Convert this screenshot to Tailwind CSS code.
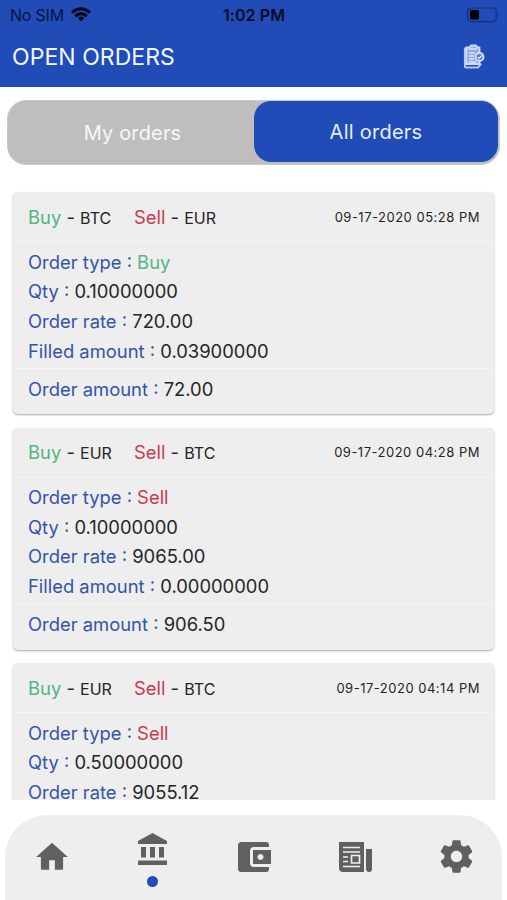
<!DOCTYPE html>
<html lang="en">
<head>
<meta charset="utf-8">
<title>Open orders</title>
<script src="https://cdn.jsdelivr.net/npm/@tailwindcss/browser@4"></script>
</head>
<body class="bg-white font-['Inter',sans-serif]">
<div class="flex h-[900px] w-[507px] flex-col overflow-hidden">
  <header class="h-[87px] shrink-0 bg-[#214bb6]">
    <div class="grid h-[29px] grid-cols-3 items-center pl-[10px] pr-[7px] text-[#0a1440]">
      <div class="flex items-center gap-[7px]">
        <span class="text-[16px] tracking-[-0.2px]">No SIM</span>
        <svg class="h-[15px] w-[20px]" viewBox="0 0 20 15" fill="none" stroke="#020617" stroke-width="3"><path d="M1 5.6Q10-2 19 5.6M4.3 9Q10 4.2 15.7 9"/><path d="M6.8 11Q10 8.2 13.2 11L10 14.5Z" fill="#020617" stroke="none"/></svg>
      </div>
      <span class="-ml-[2px] text-center text-[16px] font-semibold tracking-[0.1px] text-[#040b26]">1:02 PM</span>
      <svg class="h-[16px] w-[33px] justify-self-end" viewBox="0 0 33 16"><rect x=".7" y="1" width="28.6" height="13.6" rx="3.5" fill="none" stroke="#152e78" stroke-width="1.2"/><rect x="3" y="3" width="9" height="9.6" rx="1.5" fill="#000"/><path d="M31 5.5q2 2.3 0 4.6z" fill="#152e78"/></svg>
    </div>
    <div class="flex h-[57px] items-center justify-between pl-[12px] pr-[22px]">
      <h1 class="text-[23px] tracking-[0.05px] text-[#f1f6ff]">OPEN ORDERS</h1>
      <svg class="-mt-[2px] h-[25px] w-[22px]" viewBox="0 0 22 25" fill="none"><path d="M2 3.500v19q0 1 1 1h12l3-4" stroke="#b3c7f5" stroke-width="2.200"/><path d="M3.500 3.500h3l1.500-2h5l1.500 2h2V20H3.500z" fill="#8fa8e4" stroke="#cfddfb" stroke-width="1.800"/><path d="M6 5h8M6 9h6M6 12h5M6 15h5M6 18h7" stroke="#dbe6ff" stroke-width="1.400"/><circle cx="16.500" cy="13" r="4" fill="#5878cd" stroke="#cfddfb" stroke-width="2"/><path d="m14.700 13 1.500 1.500 2.500-3" stroke="#dbe6ff" stroke-width="1.300"/></svg>
    </div>
  </header>
  <main class="flex h-[713px] shrink-0 flex-col overflow-hidden pt-[13px]">
    <div class="mx-[7px] flex h-[65px] shrink-0 rounded-[19px] border border-[#c9c9c9] bg-[#bfbdbd] text-[20px] text-white">
      <div class="flex w-[246px] items-center justify-center pl-[3px]"><span class="tracking-[0.15px] text-[#f8f8f8]">My orders</span></div>
      <div class="mr-[1px] flex h-[61px] flex-1 items-center justify-center rounded-[17px] bg-[#214bb6] pt-[1px] text-[#e6efff]"><span class="tracking-[0.25px]">All orders</span></div>
    </div>
    <div id="orders" class="flex flex-col gap-[13.5px] px-[13px] pt-[27px]"></div>
  </main>
  <div class="h-[100px] shrink-0 px-[5px] pt-[15px]">
    <nav class="flex h-[85px] rounded-t-[42px] bg-[#eee] text-[#5f6061]">
      <div class="flex w-[93px] justify-center pt-[23px]"><svg class="h-[38px] w-[38px]" viewBox="0 0 24 24" fill="currentColor"><path d="M10.200 20v-6h3.600v6h5.200v-8h3L12 3 2 12h3v8z"/></svg></div>
      <div class="flex w-[109px] flex-col items-center pt-[18px]"><svg class="h-[32px] w-[29px]" viewBox="0 0 29 32" fill="currentColor"><path d="M14.500 0 29 8v3H0V8zM3 14h5v10.500H3zM12 14h5v10.500h-5zM21 14h5v10.500h-5zM0 27.500h29V32H0z"/></svg><i class="mt-[11px] h-[11px] w-[11px] rounded-full bg-[#214bb6]"></i></div>
      <div class="flex w-[94px] justify-center pt-[26px]"><svg class="h-[32px] w-[33px]" viewBox="0 0 33 32" fill="currentColor"><path d="M3.500 1h24.500q3 0 3 3v2H16q-4 0-4 4v12q0 4 4 4h15v2q0 3-3 3H3.500Q0 31 0 27.500v-23Q0 1 3.500 1z"/><path fill-rule="evenodd" d="M15 9h18v14H15zm7.500 4a3 3 0 1 0 .01 0z"/></svg></div>
      <div class="flex w-[108px] justify-center pt-[26px]"><svg class="h-[32px] w-[33px]" viewBox="0 0 33 32"><path d="M0 1h25v30H4q-4 0-4-4zM27 8h6v20q0 3-3 3t-3-3z" fill="currentColor"/><path d="M4 6.500h17M4 11h17M4 16h5M4 20.500h5M4 25.500h17" stroke="#eee" stroke-width="1.700"/><path d="M12.500 14.500h8v7.500h-8z" fill="currentColor" stroke="#eee" stroke-width="1.700"/></svg></div>
      <div class="flex w-[93px] justify-center pt-[22px] pl-[2px]"><svg class="h-[39px] w-[39px]" viewBox="0 0 24 24" fill="currentColor"><path d="M19.430 12.980c.04-.32.07-.64.07-.98s-.03-.66-.07-.98l2.110-1.650c.19-.15.24-.42.12-.64l-2-3.460c-.12-.22-.39-.3-.61-.22l-2.490 1c-.52-.4-1.080-.73-1.690-.98l-.38-2.650C14.460 2.180 14.250 2 14 2h-4c-.25 0-.46.18-.49.42l-.38 2.650c-.61.25-1.170.59-1.690.98l-2.490-1c-.23-.09-.49 0-.61.22l-2 3.460c-.13.22-.07.49.12.64l2.110 1.650c-.04.32-.07.65-.07.98s.03.66.07.98l-2.110 1.650c-.19.15-.24.42-.12.64l2 3.460c.12.22.39.3.61.22l2.490-1c.52.4 1.080.73 1.690.98l.38 2.650c.03.24.24.42.49.42h4c.25 0 .46-.18.49-.42l.38-2.650c.61-.25 1.170-.59 1.690-.98l2.490 1c.23.09.49 0 .61-.22l2-3.460c.12-.22.07-.49-.12-.64l-2.110-1.650zM12 15.500c-1.930 0-3.500-1.570-3.500-3.500s1.570-3.500 3.500-3.500 3.500 1.570 3.500 3.500-1.570 3.500-3.500 3.500z"/></svg></div>
    </nav>
  </div>
</div>
<script>
const orders = [
  ['BTC', 'EUR', '09-17-2020 05:28 PM', 'Buy', '0.10000000', '720.00', '0.03900000', '72.00'],
  ['EUR', 'BTC', '09-17-2020 04:28 PM', 'Sell', '0.10000000', '9065.00', '0.00000000', '906.50'],
  ['EUR', 'BTC', '09-17-2020 04:14 PM', 'Sell', '0.50000000', '9055.12'],
];
const row = (label, value, color = 'text-[#252525]') =>
  value ? `<div>${label} : <span class="${color}">${value}</span></div>` : '';
document.getElementById('orders').innerHTML = orders.map(([buy, sell, date, type, qty, rate, filled, amount]) => `
  <article class="h-[222px] shrink-0 rounded-[5px] bg-[#eee] text-[18.400px] text-[#3455a8] shadow-[0_1px_2px_rgba(0,0,0,0.35)]">
    <div class="flex h-[50px] items-center justify-between border-b border-[#f5f5f5] pl-[15px] pr-[14px] pt-[2px] text-[#252525]">
      <div class="flex items-baseline">
        <div class="w-[106px]"><span class="text-[#50b783]">Buy</span> - <span class="text-[16px]">${buy}</span></div>
        <div><span class="text-[#c93c50]">Sell</span> - <span class="text-[16px]">${sell}</span></div>
      </div>
      <span class="text-[13px] tracking-[0.500px]">${date}</span>
    </div>
    <div class="h-[127px] border-b border-[#f5f5f5] pl-[15px] pt-[5.500px] leading-[29.700px]">
      ${row('Order type', type, type === 'Buy' ? 'text-[#50b783]' : 'text-[#c93c50]')}
      ${row('Qty', qty)}
      ${row('Order rate', rate)}
      ${row('Filled amount', filled)}
    </div>
    <div class="pl-[15px] pt-[5.500px] leading-[29.700px]">${row('Order amount', amount)}</div>
  </article>`).join('');
</script>
</body>
</html>
